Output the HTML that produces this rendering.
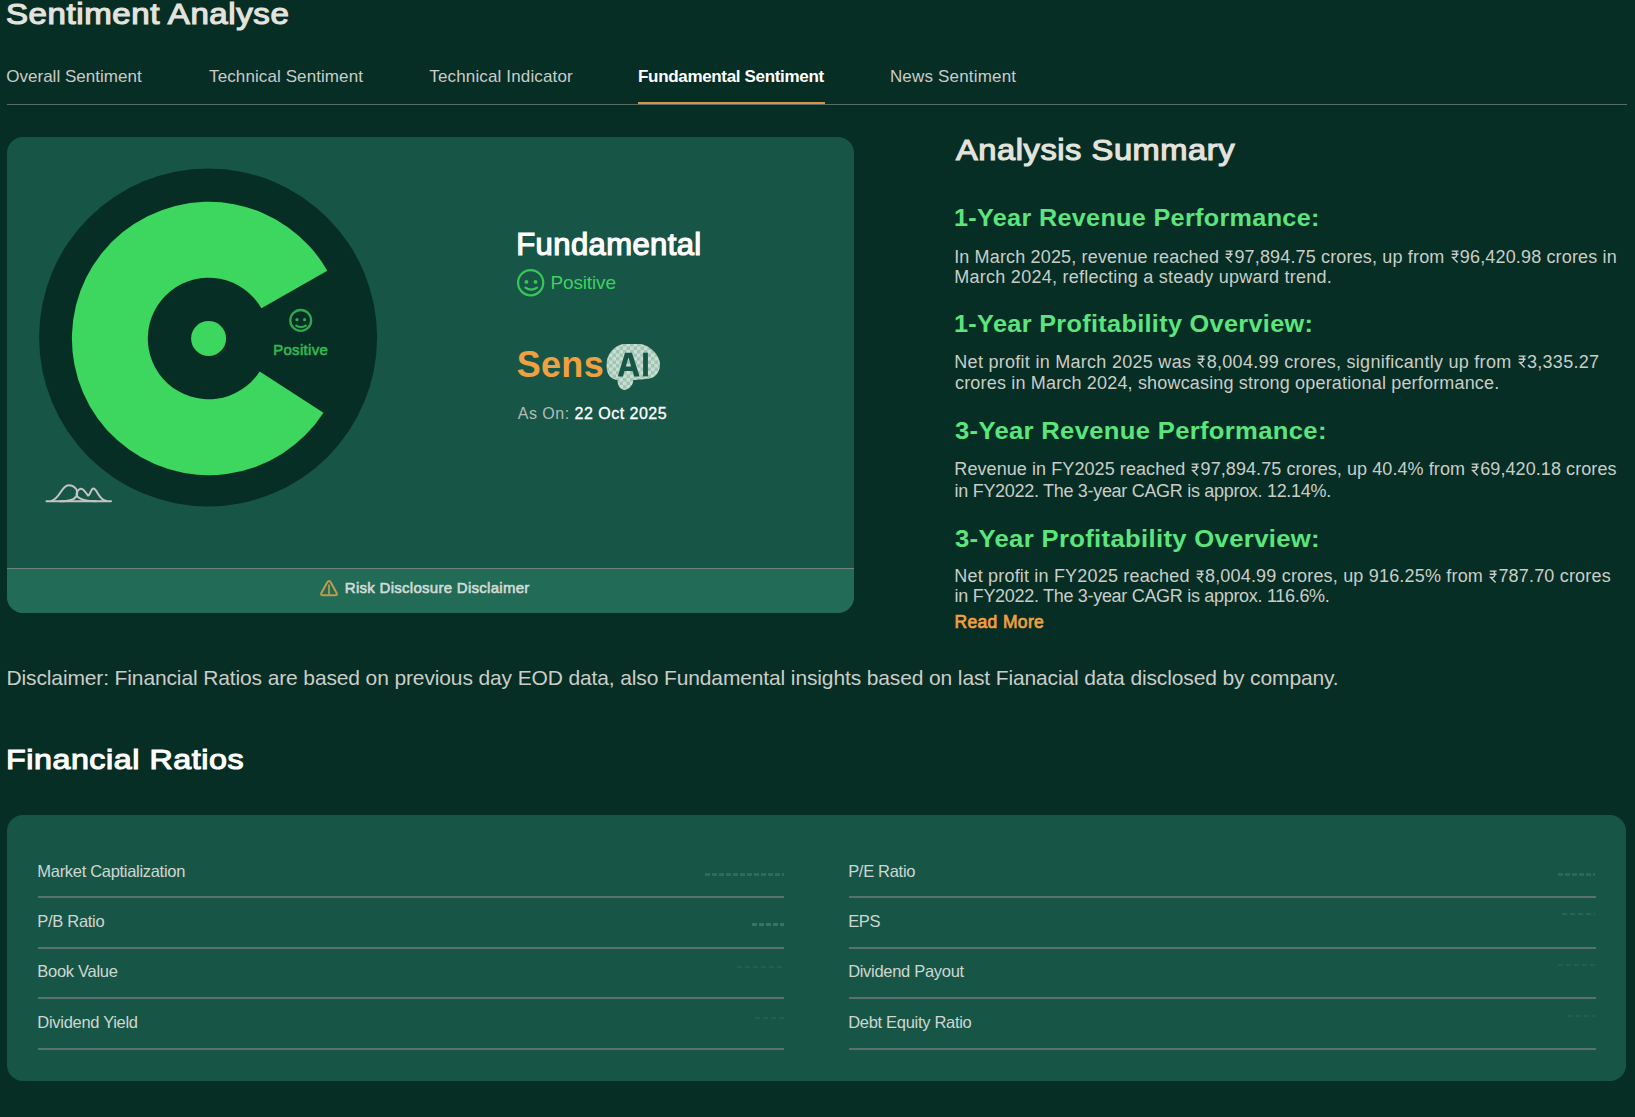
<!DOCTYPE html>
<html><head><meta charset="utf-8">
<style>
*{margin:0;padding:0;box-sizing:border-box}
html,body{width:1635px;height:1117px;overflow:hidden;background:#072e25;font-family:"Liberation Sans",sans-serif}
.t{position:absolute;white-space:nowrap}
.rs{display:inline-block;vertical-align:baseline;margin-bottom:-0.02em}
.box{position:absolute}
svg.full{position:absolute;left:0;top:0}
</style></head>
<body>
<div class="box" style="left:7px;top:104px;width:1620px;height:1px;background:#5a6d67"></div>
<div class="box" style="left:638px;top:102px;width:187px;height:2px;background:#d4944a"></div>

<div class="box" style="left:7px;top:137px;width:847px;height:476px;background:#175647;border-radius:16px;overflow:hidden">
  <div class="box" style="left:0;top:431px;width:847px;height:45px;background:#216b57;border-top:1px solid #6f857e"></div>
</div>

<div class="box" style="left:7px;top:815px;width:1619px;height:266px;background:#175647;border-radius:16px"></div>
<div class="box" style="left:38px;top:896px;width:746px;height:2px;background:#5b716a"></div>
<div class="box" style="left:849px;top:896px;width:747px;height:2px;background:#5b716a"></div>
<div class="box" style="left:38px;top:947px;width:746px;height:2px;background:#5b716a"></div>
<div class="box" style="left:849px;top:947px;width:747px;height:2px;background:#5b716a"></div>
<div class="box" style="left:38px;top:997px;width:746px;height:2px;background:#5b716a"></div>
<div class="box" style="left:849px;top:997px;width:747px;height:2px;background:#5b716a"></div>
<div class="box" style="left:38px;top:1048px;width:746px;height:2px;background:#5b716a"></div>
<div class="box" style="left:849px;top:1048px;width:747px;height:2px;background:#5b716a"></div>

<div class="box" style="left:705px;top:873px;width:79px;height:3px;background:repeating-linear-gradient(90deg,rgba(150,190,175,.19) 0 5px,transparent 5px 7px)"></div>
<div class="box" style="left:752px;top:923px;width:32px;height:3px;background:repeating-linear-gradient(90deg,rgba(170,200,185,.25) 0 5px,transparent 5px 7px)"></div>
<div class="box" style="left:737px;top:966px;width:47px;height:2px;background:repeating-linear-gradient(90deg,rgba(150,190,175,.09) 0 5px,transparent 5px 8px)"></div>
<div class="box" style="left:755px;top:1017px;width:29px;height:2px;background:repeating-linear-gradient(90deg,rgba(150,190,175,.08) 0 5px,transparent 5px 8px)"></div>
<div class="box" style="left:1558px;top:873px;width:37px;height:3px;background:repeating-linear-gradient(90deg,rgba(150,190,175,.16) 0 5px,transparent 5px 7px)"></div>
<div class="box" style="left:1562px;top:913px;width:33px;height:2px;background:repeating-linear-gradient(90deg,rgba(150,190,175,.13) 0 5px,transparent 5px 8px)"></div>
<div class="box" style="left:1558px;top:964px;width:37px;height:2px;background:repeating-linear-gradient(90deg,rgba(150,190,175,.09) 0 5px,transparent 5px 8px)"></div>
<div class="box" style="left:1568px;top:1015px;width:27px;height:2px;background:repeating-linear-gradient(90deg,rgba(150,190,175,.08) 0 5px,transparent 5px 8px)"></div>

<svg class="full" width="1635" height="1117" viewBox="0 0 1635 1117">
  <circle cx="208.1" cy="337.45" r="169" fill="#072e25"/>
  <path d="M327.28 270.67A136.70 136.70 0 1 0 323.44 412.65L259.68 371.48A60.80 60.80 0 1 1 261.39 308.33Z" fill="#3dd65e"/>
  <circle cx="208.6" cy="338.5" r="17.5" fill="#3dd65e"/>
  <g fill="none" stroke="#2ea94c" stroke-width="2.3" stroke-linecap="round">
    <circle cx="300.7" cy="320.4" r="10.4"/>
    <path d="M296.2 325.6Q301 328.8 305.8 325.6"/>
  </g>
  <circle cx="297" cy="319.7" r="1.6" fill="#2ea94c"/><circle cx="304.6" cy="319.7" r="1.6" fill="#2ea94c"/>
  <g fill="none" stroke="#c3c6c2" stroke-width="2" stroke-linecap="round">
    <path d="M46.5 501.3H111"/>
    <path d="M52 500.6C60 498 62 485.3 68.5 485.3C75 485.3 79 491 76.5 496C74 500.5 68 501 60 501.3"/>
    <path d="M96 501.3C84 501.3 74 498 77 492C79 488 82 487.5 84.5 491L87.7 495.2C89.5 497 91 488.6 93.3 488.6C97 488.6 99 500 106 500.8"/>
  </g>
  <g fill="none" stroke="#37c758" stroke-width="2.2">
    <circle cx="530.65" cy="282.7" r="12.6"/>
    <path d="M525.4 287.6Q531.2 291.6 537 287.6" stroke-linecap="round" stroke-width="2.3"/>
  </g>
  <circle cx="526.4" cy="281.9" r="1.9" fill="#37c758"/><circle cx="535.5" cy="281.9" r="1.9" fill="#37c758"/>
  <defs>
    <pattern id="chk" width="7" height="7" patternUnits="userSpaceOnUse">
      <rect width="7" height="7" fill="#c6dfd3"/><rect width="3.5" height="3.5" fill="#a3c4b5"/><rect x="3.5" y="3.5" width="3.5" height="3.5" fill="#a3c4b5"/>
    </pattern>
  </defs>
  <path d="M623.5 343.9L638 343.9C643 344 648 345.5 653 350.5C657 354.5 660 359 660 364.6C660 370 657.5 374 655.2 375.8C652 378.5 648 379 640.7 379.6L633.2 380.1C633.5 383 631 387.5 628.3 388.6C626 390.5 622 390.5 619.8 387.5C618.2 385.5 617.6 383 617.6 380.2C614 379.5 610.5 378 608.5 374.5C606.8 371.5 606.6 368 606.6 365.1C606.6 360 607.5 356 610.6 352.2C613 349 617 345 623.5 343.9Z" fill="url(#chk)"/>
  <path d="M617.8 376.4L625 352.7H632L639.6 376.4H634.2L632.6 371H624.5L623 376.4ZM625.8 366.6H631.2L628.5 357.5Z" fill="#175647"/>
  <rect x="643.1" y="352.7" width="4.8" height="23.7" fill="#175647"/>
  <g fill="none" stroke="#bf9c4b" stroke-width="2" stroke-linejoin="round">
    <path d="M327.3 582.3Q329 579.6 330.7 582.3L336.6 593Q337.6 595.3 335.2 595.3H322.8Q320.4 595.3 321.4 593Z"/>
    <path d="M329 584.6V594.5" stroke-width="1.7"/>
  </g>
</svg>
<div class="t" id="title" style="left:6.46px;top:0.05px;font-size:29px;line-height:29px;font-weight:400;letter-spacing:0.500px;-webkit-text-stroke:1.16px currentColor;transform:scaleX(1.1393);transform-origin:0 0"><span style="color:#e3e3de">Sentiment Analyse</span></div>
<div class="t" id="tab0" style="left:6.19px;top:68.41px;font-size:17px;line-height:17px;font-weight:400;letter-spacing:0.026px"><span style="color:#c9ccc7">Overall Sentiment</span></div>
<div class="t" id="tab1" style="left:209.12px;top:68.41px;font-size:17px;line-height:17px;font-weight:400;letter-spacing:0.094px"><span style="color:#c9ccc7">Technical Sentiment</span></div>
<div class="t" id="tab2" style="left:429.32px;top:68.41px;font-size:17px;line-height:17px;font-weight:400;letter-spacing:0.142px"><span style="color:#c9ccc7">Technical Indicator</span></div>
<div class="t" id="tab3" style="left:638.06px;top:68.41px;font-size:17px;line-height:17px;font-weight:700;letter-spacing:-0.331px"><span style="color:#ffffff">Fundamental Sentiment</span></div>
<div class="t" id="tab4" style="left:889.91px;top:68.41px;font-size:17px;line-height:17px;font-weight:400;letter-spacing:0.181px"><span style="color:#c9ccc7">News Sentiment</span></div>
<div class="t" id="fund" style="left:516.28px;top:229.05px;font-size:31px;line-height:31px;font-weight:400;letter-spacing:0.400px;-webkit-text-stroke:1.24px currentColor"><span style="color:#ffffff">Fundamental</span></div>
<div class="t" id="pos1" style="left:550.44px;top:272.51px;font-size:19px;line-height:19px;font-weight:400;letter-spacing:-0.137px"><span style="color:#3cd25c">Positive</span></div>
<div class="t" id="sens" style="left:516.76px;top:346.52px;font-size:36px;line-height:36px;font-weight:700;letter-spacing:0.292px"><span style="color:#f0a040">Sens</span></div>
<div class="t" id="ason" style="left:517.77px;top:406.05px;font-size:16px;line-height:16px;font-weight:400;letter-spacing:0.487px"><span style="color:#b3bcb5">As On: </span><span style="color:#ffffff;-webkit-text-stroke:0.3px currentColor">22 Oct 2025</span></div>
<div class="t" id="pos2" style="left:273.17px;top:341.80px;font-size:15px;line-height:15px;font-weight:400;letter-spacing:0.303px;-webkit-text-stroke:0.60px currentColor"><span style="color:#33b852">Positive</span></div>
<div class="t" id="risk" style="left:344.87px;top:579.70px;font-size:15px;line-height:15px;font-weight:400;letter-spacing:0.275px;-webkit-text-stroke:0.60px currentColor"><span style="color:#d2dbd6">Risk Disclosure Disclaimer</span></div>
<div class="t" id="asum" style="left:956.19px;top:136.25px;font-size:29px;line-height:29px;font-weight:400;letter-spacing:0.500px;-webkit-text-stroke:1.16px currentColor;transform:scaleX(1.1249);transform-origin:0 0"><span style="color:#e3e3de">Analysis Summary</span></div>
<div class="t" id="h0" style="left:953.91px;top:205.88px;font-size:24px;line-height:24px;font-weight:700;letter-spacing:0.300px;transform:scaleX(1.0502);transform-origin:0 0"><span style="color:#5ce47d">1-Year Revenue Performance:</span></div>
<div class="t" id="h1" style="left:953.91px;top:312.48px;font-size:24px;line-height:24px;font-weight:700;letter-spacing:0.300px;transform:scaleX(1.0532);transform-origin:0 0"><span style="color:#5ce47d">1-Year Profitability Overview:</span></div>
<div class="t" id="h2" style="left:954.91px;top:419.48px;font-size:24px;line-height:24px;font-weight:700;letter-spacing:0.300px;transform:scaleX(1.0674);transform-origin:0 0"><span style="color:#5ce47d">3-Year Revenue Performance:</span></div>
<div class="t" id="h3" style="left:954.91px;top:527.08px;font-size:24px;line-height:24px;font-weight:700;letter-spacing:0.300px;transform:scaleX(1.0698);transform-origin:0 0"><span style="color:#5ce47d">3-Year Profitability Overview:</span></div>
<div class="t" id="b0" style="left:954.14px;top:247.66px;font-size:18px;line-height:18px;font-weight:400;letter-spacing:0.159px"><span style="color:#c9cdc7">In March 2025, revenue reached <svg class="rs" viewBox="0 0 10 14" width="0.556em" height="0.73em" style="margin-right:0.159px"><path d="M1.5 1.2H8.8M1.5 4.6H8.8M2.5 1.2H4.6C7.6 1.2 7.6 8 4.6 8H2.5L7.8 13.3" fill="none" stroke="currentColor" stroke-width="1.5"/></svg>97,894.75 crores, up from <svg class="rs" viewBox="0 0 10 14" width="0.556em" height="0.73em" style="margin-right:0.159px"><path d="M1.5 1.2H8.8M1.5 4.6H8.8M2.5 1.2H4.6C7.6 1.2 7.6 8 4.6 8H2.5L7.8 13.3" fill="none" stroke="currentColor" stroke-width="1.5"/></svg>96,420.98 crores in</span></div>
<div class="t" id="b1" style="left:954.32px;top:267.86px;font-size:18px;line-height:18px;font-weight:400;letter-spacing:0.257px"><span style="color:#c9cdc7">March 2024, reflecting a steady upward trend.</span></div>
<div class="t" id="b2" style="left:954.32px;top:352.96px;font-size:18px;line-height:18px;font-weight:400;letter-spacing:0.278px"><span style="color:#c9cdc7">Net profit in March 2025 was <svg class="rs" viewBox="0 0 10 14" width="0.556em" height="0.73em" style="margin-right:0.278px"><path d="M1.5 1.2H8.8M1.5 4.6H8.8M2.5 1.2H4.6C7.6 1.2 7.6 8 4.6 8H2.5L7.8 13.3" fill="none" stroke="currentColor" stroke-width="1.5"/></svg>8,004.99 crores, significantly up from <svg class="rs" viewBox="0 0 10 14" width="0.556em" height="0.73em" style="margin-right:0.278px"><path d="M1.5 1.2H8.8M1.5 4.6H8.8M2.5 1.2H4.6C7.6 1.2 7.6 8 4.6 8H2.5L7.8 13.3" fill="none" stroke="currentColor" stroke-width="1.5"/></svg>3,335.27</span></div>
<div class="t" id="b3" style="left:955.04px;top:374.46px;font-size:18px;line-height:18px;font-weight:400;letter-spacing:0.173px"><span style="color:#c9cdc7">crores in March 2024, showcasing strong operational performance.</span></div>
<div class="t" id="b4" style="left:954.32px;top:460.36px;font-size:18px;line-height:18px;font-weight:400;letter-spacing:0.077px"><span style="color:#c9cdc7">Revenue in FY2025 reached <svg class="rs" viewBox="0 0 10 14" width="0.556em" height="0.73em" style="margin-right:0.077px"><path d="M1.5 1.2H8.8M1.5 4.6H8.8M2.5 1.2H4.6C7.6 1.2 7.6 8 4.6 8H2.5L7.8 13.3" fill="none" stroke="currentColor" stroke-width="1.5"/></svg>97,894.75 crores, up 40.4% from <svg class="rs" viewBox="0 0 10 14" width="0.556em" height="0.73em" style="margin-right:0.077px"><path d="M1.5 1.2H8.8M1.5 4.6H8.8M2.5 1.2H4.6C7.6 1.2 7.6 8 4.6 8H2.5L7.8 13.3" fill="none" stroke="currentColor" stroke-width="1.5"/></svg>69,420.18 crores</span></div>
<div class="t" id="b5" style="left:954.60px;top:481.96px;font-size:18px;line-height:18px;font-weight:400;letter-spacing:-0.302px"><span style="color:#c9cdc7">in FY2022. The 3-year CAGR is approx. 12.14%.</span></div>
<div class="t" id="b6" style="left:954.32px;top:567.36px;font-size:18px;line-height:18px;font-weight:400;letter-spacing:0.184px"><span style="color:#c9cdc7">Net profit in FY2025 reached <svg class="rs" viewBox="0 0 10 14" width="0.556em" height="0.73em" style="margin-right:0.184px"><path d="M1.5 1.2H8.8M1.5 4.6H8.8M2.5 1.2H4.6C7.6 1.2 7.6 8 4.6 8H2.5L7.8 13.3" fill="none" stroke="currentColor" stroke-width="1.5"/></svg>8,004.99 crores, up 916.25% from <svg class="rs" viewBox="0 0 10 14" width="0.556em" height="0.73em" style="margin-right:0.184px"><path d="M1.5 1.2H8.8M1.5 4.6H8.8M2.5 1.2H4.6C7.6 1.2 7.6 8 4.6 8H2.5L7.8 13.3" fill="none" stroke="currentColor" stroke-width="1.5"/></svg>787.70 crores</span></div>
<div class="t" id="b7" style="left:954.60px;top:587.46px;font-size:18px;line-height:18px;font-weight:400;letter-spacing:-0.303px"><span style="color:#c9cdc7">in FY2022. The 3-year CAGR is approx. 116.6%.</span></div>
<div class="t" id="readmore" style="left:954.41px;top:614.38px;font-size:17.5px;line-height:17.5px;font-weight:400;letter-spacing:0.358px;-webkit-text-stroke:0.70px currentColor"><span style="color:#f0a040">Read More</span></div>
<div class="t" id="disc" style="left:6.48px;top:666.62px;font-size:21px;line-height:21px;font-weight:400;letter-spacing:-0.128px"><span style="color:#cacdc8">Disclaimer: Financial Ratios are based on previous day EOD data, also Fundamental insights based on last Fianacial data disclosed by company.</span></div>
<div class="t" id="finr" style="left:6.20px;top:744.87px;font-size:28.5px;line-height:28.5px;font-weight:400;letter-spacing:0.500px;-webkit-text-stroke:1.14px currentColor;transform:scaleX(1.1298);transform-origin:0 0"><span style="color:#ffffff">Financial Ratios</span></div>
<div class="t" id="ll0" style="left:37.35px;top:862.53px;font-size:16.5px;line-height:16.5px;font-weight:400;letter-spacing:-0.305px"><span style="color:#cfd6d2">Market Captialization</span></div>
<div class="t" id="lr0" style="left:848.15px;top:862.53px;font-size:16.5px;line-height:16.5px;font-weight:400;letter-spacing:-0.300px"><span style="color:#cfd6d2">P/E Ratio</span></div>
<div class="t" id="ll1" style="left:37.35px;top:912.73px;font-size:16.5px;line-height:16.5px;font-weight:400;letter-spacing:-0.300px"><span style="color:#cfd6d2">P/B Ratio</span></div>
<div class="t" id="lr1" style="left:848.15px;top:912.73px;font-size:16.5px;line-height:16.5px;font-weight:400;letter-spacing:-0.300px"><span style="color:#cfd6d2">EPS</span></div>
<div class="t" id="ll2" style="left:37.35px;top:963.33px;font-size:16.5px;line-height:16.5px;font-weight:400;letter-spacing:-0.300px"><span style="color:#cfd6d2">Book Value</span></div>
<div class="t" id="lr2" style="left:848.15px;top:963.33px;font-size:16.5px;line-height:16.5px;font-weight:400;letter-spacing:-0.300px"><span style="color:#cfd6d2">Dividend Payout</span></div>
<div class="t" id="ll3" style="left:37.35px;top:1014.23px;font-size:16.5px;line-height:16.5px;font-weight:400;letter-spacing:-0.300px"><span style="color:#cfd6d2">Dividend Yield</span></div>
<div class="t" id="lr3" style="left:848.15px;top:1014.23px;font-size:16.5px;line-height:16.5px;font-weight:400;letter-spacing:-0.300px"><span style="color:#cfd6d2">Debt Equity Ratio</span></div>
</body></html>
